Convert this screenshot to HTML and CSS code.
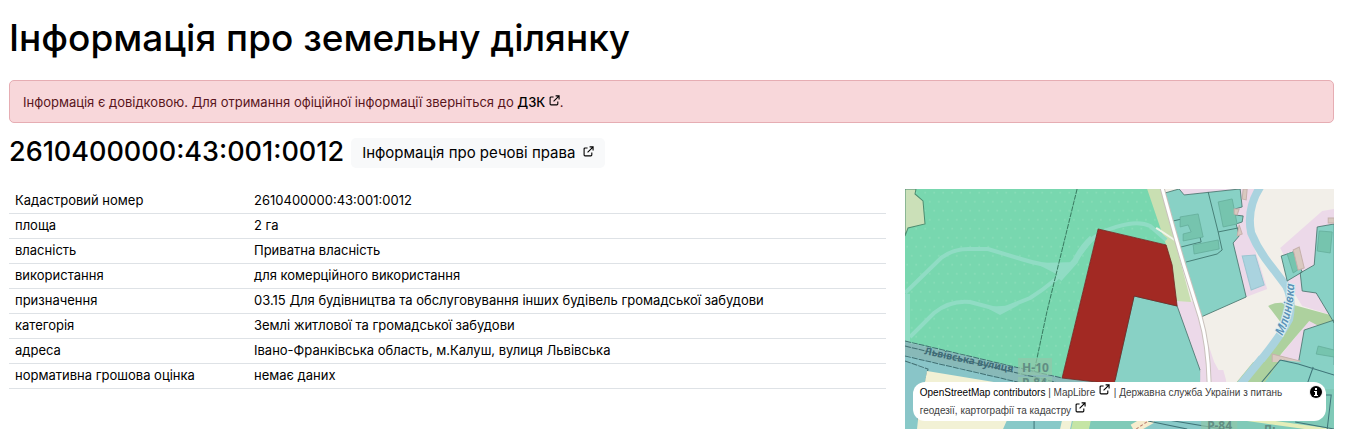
FILE: index.html
```
<!DOCTYPE html>
<html lang="uk">
<head>
<meta charset="utf-8">
<meta name="viewport" content="width=device-width, initial-scale=1">
<title>Інформація про земельну ділянку</title>
<link rel="stylesheet" href="styles.css">
</head>
<body>
<svg class="defs" aria-hidden="true">
  <symbol id="external" viewBox="0 0 12 12">
    <path d="M5 2.2H2.2Q1.200 2.200 1.200 3.200V9.800Q1.200 10.800 2.200 10.800H8.600Q9.600 10.800 9.600 9.800V7M7.200 1H11V4.800M10.800 1.200L5 7" fill="none" stroke="currentColor" stroke-width="1.2"/>
  </symbol>
</svg>
<main class="page">
  <h1 class="title">Інформація про земельну ділянку</h1>
  <div class="alert" role="alert">Інформація є довідковою. Для отримання офіційної інформації зверніться до <a class="alert-link" href="#">ДЗК <svg class="icon"><use href="#external"/></svg></a>.</div>
  <div class="heading">
    <h2 class="number">2610400000:43:001:0012</h2>
    <a class="rights" href="#">Інформація про речові права <svg class="icon"><use href="#external"/></svg></a>
  </div>
  <div class="row">
    <div class="details">
      <table class="table">
        <tbody>
          <tr><th scope="row">Кадастровий номер</th><td>2610400000:43:001:0012</td></tr>
          <tr><th scope="row">площа</th><td>2 га</td></tr>
          <tr><th scope="row">власність</th><td>Приватна власність</td></tr>
          <tr><th scope="row">використання</th><td>для комерційного використання</td></tr>
          <tr><th scope="row">призначення</th><td>03.15 Для будівництва та обслуговування інших будівель громадської забудови</td></tr>
          <tr><th scope="row">категорія</th><td>Землі житлової та громадської забудови</td></tr>
          <tr><th scope="row">адреса</th><td>Івано-Франківська область, м.Калуш, вулиця Львівська</td></tr>
          <tr><th scope="row">нормативна грошова оцінка</th><td>немає даних</td></tr>
        </tbody>
      </table>
    </div>
    <div class="map-col">
      <div class="map">
        <svg class="map-canvas" viewBox="905 189 429 240" preserveAspectRatio="xMidYMid slice" role="img" aria-label="Карта ділянки">
          <defs>
            <pattern id="trees" width="9" height="18" patternUnits="userSpaceOnUse"><path d="M2 3h1.5v1.5H2zM6.500 12H8v1.500H6.500z" fill="#9be2c1" opacity=".6"/></pattern>
            <path id="river-label" d="M1282 336Q1295 311 1294 277"/>
            <path id="street-label" d="M924 354Q960 362 1030 376"/>
          </defs>
          <path fill="#f2efe9" d="M905 189h429v240H905z"/>
          <!-- industrial zones -->
          <path fill="#ecd9e9" d="M1180 189h74l-4 45 17 55-21 8-80-90zM1334 209l-12 2-42 37 8 16-2 16 16 26 32 10zM1174 298l20 4 20 60 12 22h-28zM1306 322l-5 8-45 55 78 0 0-70z"/>
          <!-- greenery -->
          <path fill="#c9dfb2" d="M1146 189h15l30 113-15-1-12-60z"/>
          <path fill="#add19e" d="M1268 306q8-5 22-2l44 12v18l-25-13q-14 16-28 33l-22 31h-25l37-41q9-11 10-21z"/>
          <!-- river and pond -->
          <path d="M1260 187Q1246 209 1251 233Q1258 250 1270 265L1286 286Q1293 300 1289 319Q1280 336 1264 356L1240 385" fill="none" stroke="#aad3df" stroke-width="8"/>
          <path fill="#aad3df" stroke="#9cc5d1" d="M1242 256l13-1 9 30-13 5z"/>
          <!-- forest -->
          <path fill="#78d7af" d="M905 189h242l19 56-68-16-36 149-157-36z"/>
          <path fill="url(#trees)" d="M905 189h242l19 56-68-16-36 149-157-36z"/>
          <g fill="none" stroke="#90dcc4">
            <path stroke-width="4" d="M905 293l36-35q12-9 27-9h20l33 10q22 7 44 8M1166 240l-16-14q-12-6-34 1-17 5-27 15l-13 17q-19 22-46 39l-30 12-30-8q-20-2-36 11l-24 24"/>
            <path stroke-width="6" d="M1092 238q-10 9-17 23l-16 18M907 294v49"/>
          </g>
          <path fill="#90dcc4" d="M1035 263l43-1-18 14zM985 307l34-2-19 10z"/>
          <path d="M905 189h11l-1 5 8 7 2 23-17 4-3 8z" fill="#cbe0b8" stroke="#4d8c70"/>
          <path d="M1077 189l-30 122-13 61" fill="none" stroke="#397b61" stroke-dasharray="5 1"/>
          <!-- plots -->
          <g fill="#88d1c5" stroke="#426e67" stroke-width=".8">
            <path d="M1165 193l14-4 5 6 56-6 2 18-7 2-1 6 9 1-1 6-6 2 3 12-6 7 13 54-45 20-24-78z"/>
            <path d="M1134 296l43 10 24 67v12h-87zM1334 224l-17 3-3 38-14 8 2 18 14 2 18 30zM1281 256l12-4 9 20-15 9zM1334 320l-30 10-6 34-18-4-20 25h74z"/>
          </g>
          <path d="M1208 192l10 40 4 18-5 4-31 8M1173 221l22-5 6 26-20 5M1218 232l20-4M1298 364l36 11M1313 365l-7 20" fill="none" stroke="#376c64" stroke-width=".8"/>
          <g fill="#76c4ae" stroke="#64ad9b" stroke-width=".8">
            <path d="M1218 202l14-3 5 25-14 3zM1180 217l18-3 5 23-20 4v-7l8-2-3-7-8 2zM1193 245l25-5 1 9-25 5zM1319 231l13 1-2 21-13-2zM1287 254l6-2 6 17-6 4zM1318 346l16 4v7l-18-3z"/>
          </g>
          <path fill="#d9c9c0" stroke="#c6b1ac" d="M1243 189h4l-1 11-4-1zM1234 209h5l-2 6-3-1zM1239 225l3 9-5 2zM1293 250l6-3 5 21-6 2zM1328 218h6v5h-6zM1272 354l28 7v4l-16-5-12 6z"/>
          <path d="M1156 228l20 13" stroke="#f0f4e8" stroke-width="2" fill="none"/>
          <!-- southern blocks -->
          <path fill="#89c5c8" d="M905 342l157 36 100 5 0 46H905z"/>
          <path fill="#88b9b8" d="M905 342l157 36 54 3v14l-58-4-153-36z"/>
          <path d="M905 341l157 37M905 346l150 36M905 356l117 27M905 361l23 8-12 60" fill="none" stroke="#426f72" stroke-dasharray="6 1"/>
          <path fill="#f2f1d5" d="M927 371l91 15-14 43h-88z"/>
          <path fill="#88c9c8" d="M905 420h429v9H905z"/>
          <path fill="#f2f1d5" d="M918 420h89l-4 9h-86zM1062 420h10l-2 9h-10z"/>
          <path fill="#c5e5a5" d="M1073 420h18l-2 9h-18z"/>
          <path fill="#80cab8" d="M1091 420h52l-11 9h-43zM1213 383h121v46h-121z"/>
          <path fill="#88d1c5" d="M1114 380h87v6h-87z"/>
          <path fill="#ecd9e9" d="M1200 370h26v13h-26z"/>
          <path fill="#f2efe9" d="M1222 366h30l-18 18h-7z"/>
          <path fill="#add19e" d="M1253 362h30l-17 22h-31z"/>
          <path d="M1262 358l-22 27" stroke="#aad3df" stroke-width="8"/>
          <path fill="#88d1c5" d="M1280 360l54 5v24h-74z"/>
          <path d="M1162 188q15 55 22 78l16 51q8 27 9 66" stroke="#c9c1bc" stroke-width="5" fill="none"/>
          <path d="M1162 188q15 55 22 78l16 51q8 27 9 66" stroke="#fff" stroke-width="3" fill="none"/>
          <path d="M1133 429l19-11" stroke="#f7edce" stroke-width="10"/>
          <path d="M1136 429l12-8" stroke="#ba7c70" stroke-dasharray="3 2"/>
          <path d="M1240 418l94 13" stroke="#e4edb9" stroke-width="4"/>
          <path d="M1148 421l39 8M1168 420l54 9M1295 422l39 7M1324 395h7l-4 34M1034 421v8M1280 360l18 4 36 11M1313 367l-6 17M1280 360l-20 24" stroke="#3f7478" fill="none"/>
          <!-- selected parcel -->
          <path d="M1098 229l68 16 6 20 5 41-43-10-20 88-52-6z" fill="#a22923" stroke="#6d2923" stroke-width=".8"/>
          <g class="road-shield"><path d="M1018 358h34v17h-34zM1018 377h34v19h-34zM1201 420h36v9h-36z" fill="#91c7a9" opacity=".7"/><text x="1022" y="372">Н-10</text><text x="1022" y="387">Р-84</text><text x="1207" y="430">Р-84</text><text x="1263" y="434">Ль</text></g>
          <text class="street-name"><textPath href="#street-label">Львівська вулиця</textPath></text>
          <text class="river-name"><textPath href="#river-label">Млинівка</textPath></text>
        </svg>
        <div class="attribution">
          <p class="credits"><a class="osm" href="#">OpenStreetMap contributors</a> | <a href="#">MapLibre <svg class="icon"><use href="#external"/></svg></a> | <a href="#">Державна служба України з питань геодезії, картографії та кадастру <svg class="icon"><use href="#external"/></svg></a></p>
          <button class="info" type="button" aria-label="Про карту"><svg viewBox="0 0 14 14"><circle cx="7" cy="7" r="6" fill="#000"/><path d="M6 3h2v2H6zM5 6h3v4h1v1H5v-1h1V7H5z" fill="#fff"/></svg></button>
        </div>
      </div>
    </div>
  </div>
</main>
</body>
</html>
```
FILE: styles.css
```
* { box-sizing: border-box; }
body { margin: 0; background: #fff; color: #000; font: 13px/20px Inter, "Noto Sans", sans-serif; }
a { color: inherit; text-decoration: none; }
.defs { position: absolute; width: 0; height: 0; }
.page { padding: 12px 12px 14px 9px; }
.title { margin: 0 0 16px; font-size: 37px; font-weight: 500; line-height: 52px; }
.alert { padding: 11px 13px 10px; border: 1px solid #e6adb3; border-radius: 5px; background: #f8d7da; color: #58151c; }
.alert-link { color: #000; font-weight: 500; }
.icon { width: 11px; height: 11px; vertical-align: 1px; color: #000; }
.heading { display: flex; align-items: center; gap: 7px; margin: 15px 0 21px; }
.number { margin: 0; padding-bottom: 3px; font-size: 27px; font-weight: 500; line-height: 27px; }
.rights { display: flex; align-items: center; gap: 8px; padding: 5px 11px; border-radius: 5px; background: #f8f9fa; font-size: 15px; }
.rights .icon { margin-bottom: 3px; }
.row { display: flex; margin: 0 -10px; }
.details { width: 66.6%; padding: 0 9px 0 10px; }
.map-col { width: 33.4%; padding: 0 10px; }
.table { width: 100%; border-spacing: 0; table-layout: fixed; }
.table th, .table td { height: 25px; padding: 1px 6px 3px; border-bottom: 1px solid #dee2e6; font-weight: 400; text-align: left; }
.table th { width: 239px; }
.map { position: relative; height: 240px; overflow: hidden; }
.map-canvas { display: block; width: 100%; height: 100%; }
.road-shield { font: bold 12px "Noto Sans", sans-serif; fill: #618d83; }
.street-name { font: bold 10px "Noto Sans", sans-serif; fill: #3f6a76; }
.river-name { font: italic 600 12px "Noto Sans", sans-serif; fill: #5a91b7; stroke: #d9edf1; stroke-width: 2px; paint-order: stroke; }
.attribution { position: absolute; left: 8px; right: 8px; bottom: 8px; display: flex; align-items: flex-start; padding: 2px 3px 1px 7px; border-radius: 12px; background: #fff; }
.credits { flex: 1; margin: 0; padding-right: 16px; font: 10px/18px "Liberation Sans", Arial, sans-serif; color: #404040; }
.osm { color: #000; }
.credits .icon { margin: 0 1px; }
.info { width: 14px; height: 14px; margin-top: 1px; padding: 0; border: 0; border-radius: 50%; background: #eee; }
.info svg { display: block; width: 14px; height: 14px; }
```
